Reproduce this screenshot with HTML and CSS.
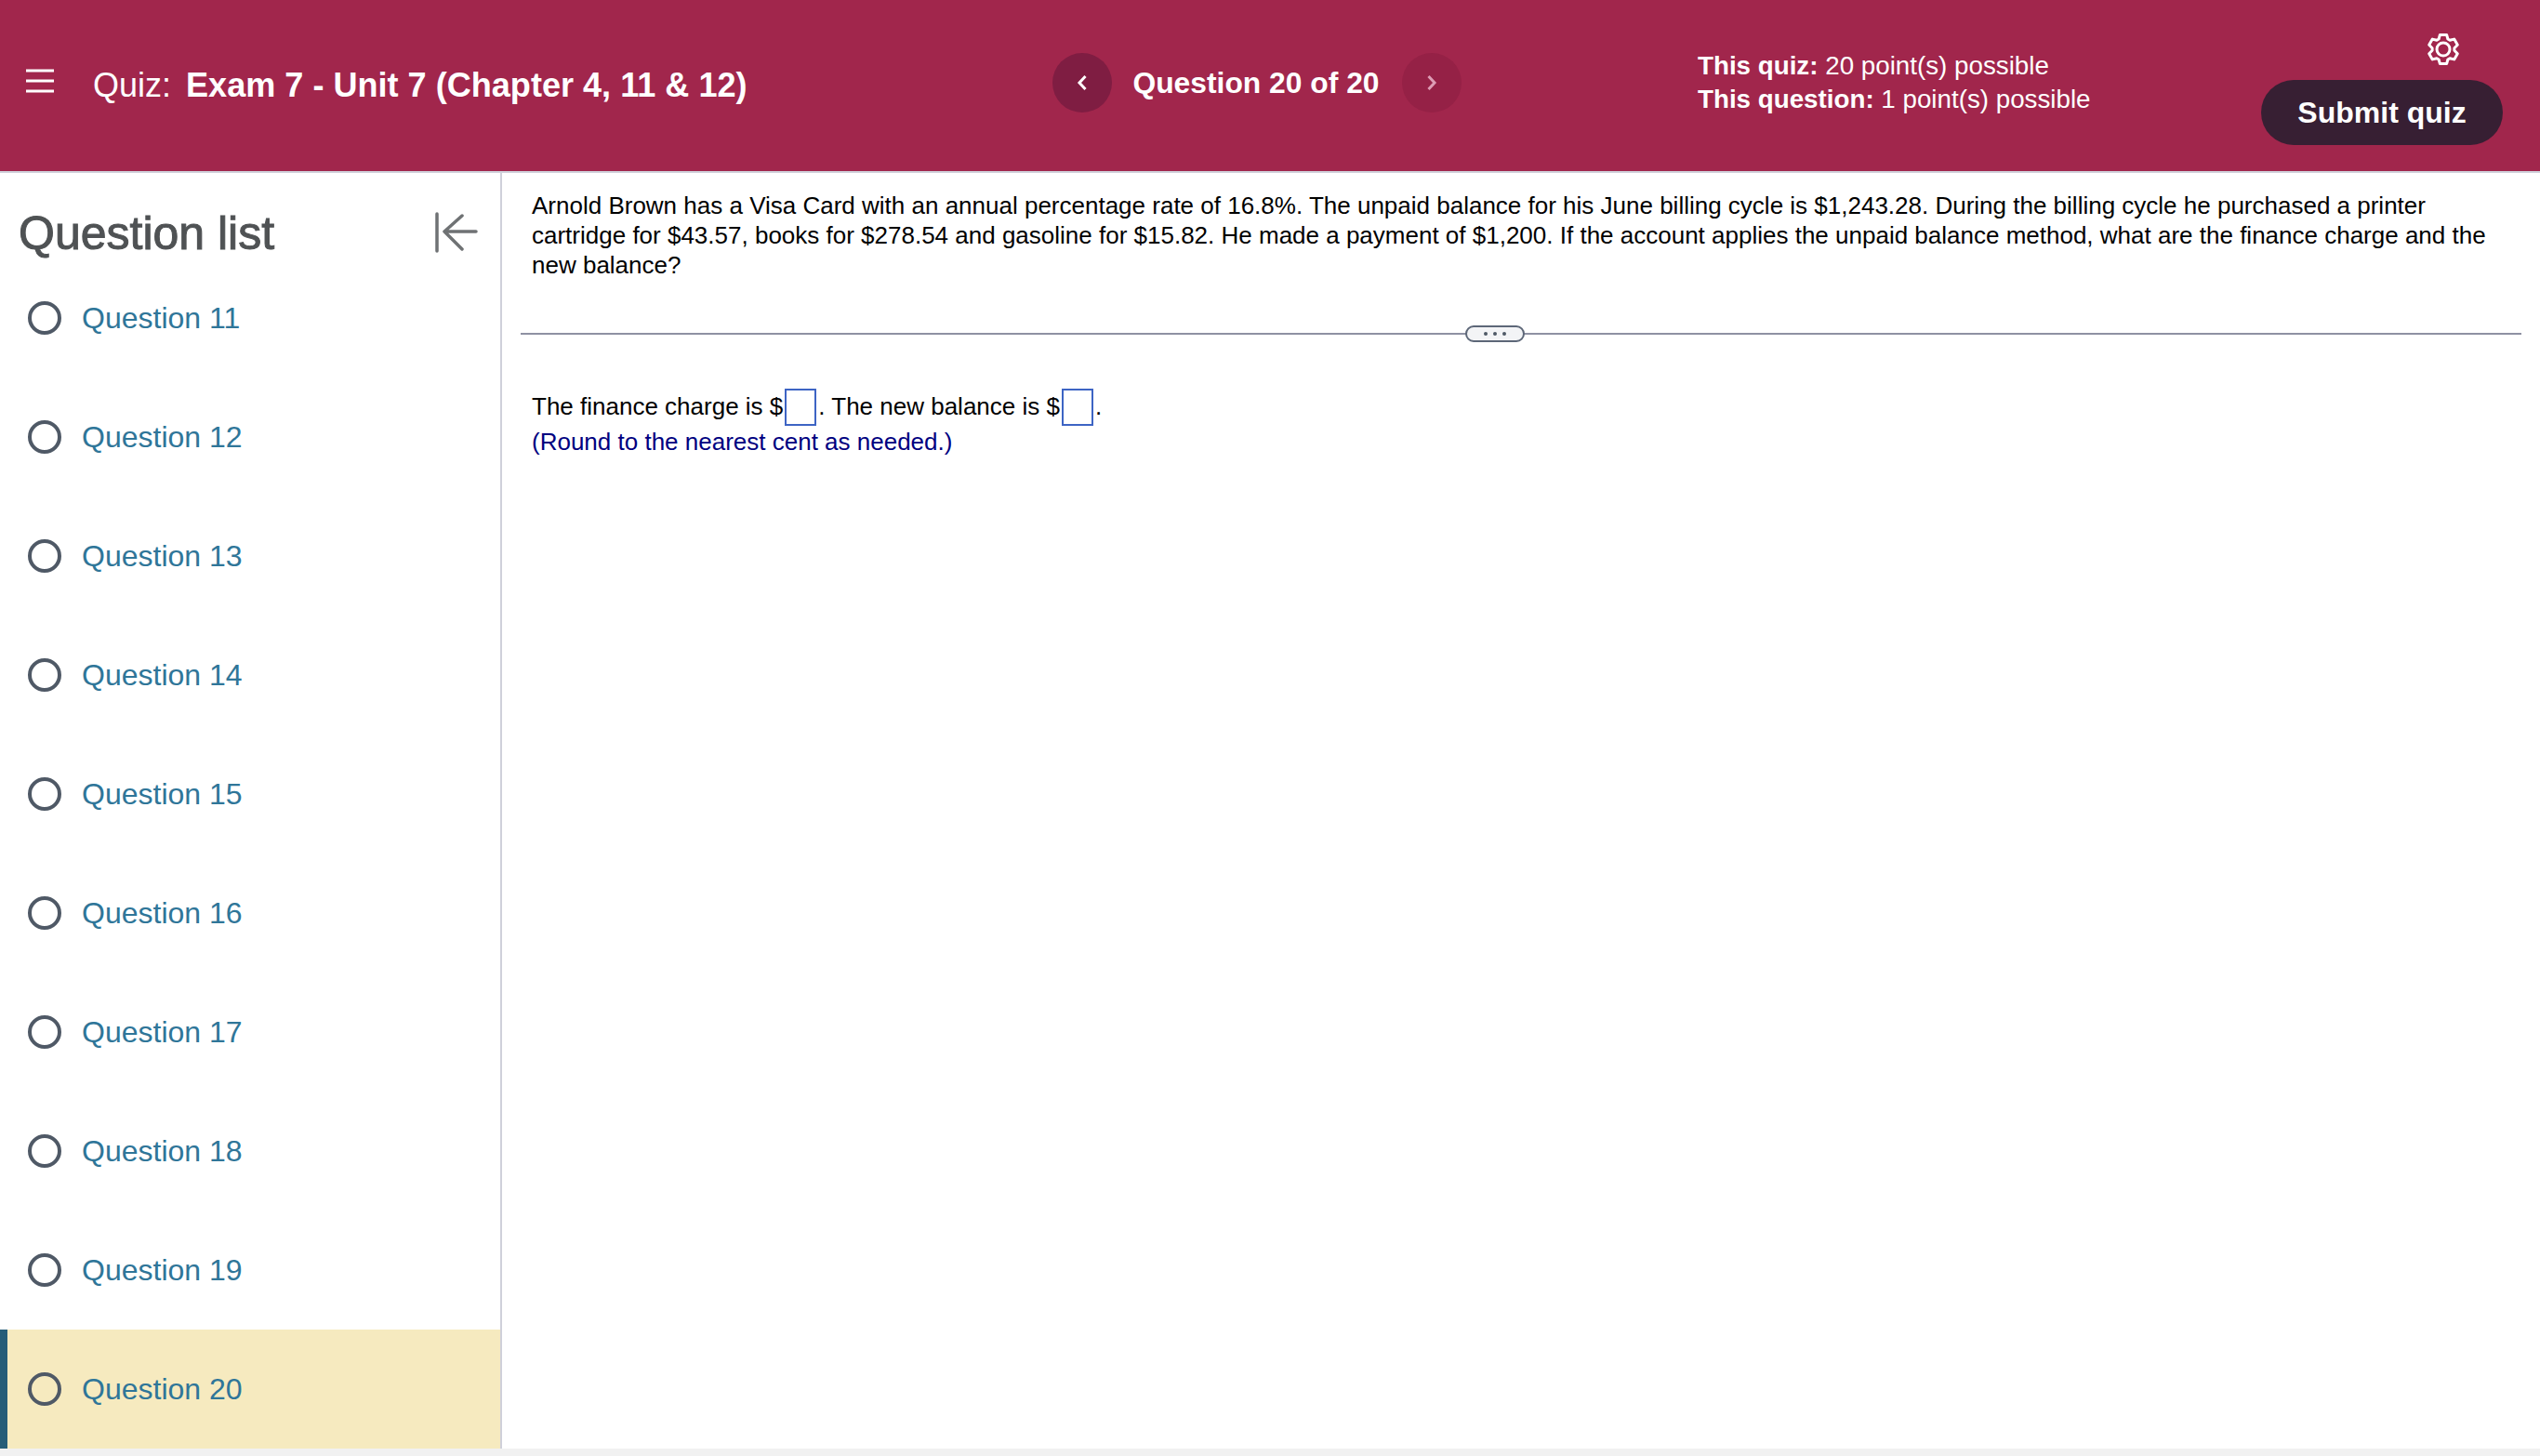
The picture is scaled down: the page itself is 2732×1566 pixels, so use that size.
FILE: index.html
```html
<!DOCTYPE html>
<html lang="en">
<head>
<meta charset="utf-8">
<title>Quiz: Exam 7 - Unit 7</title>
<link rel="stylesheet" href="styles.css">
</head>
<body>
<header class="topbar">
  <div class="title-group">
    <svg class="menu-icon" width="30" height="26" viewBox="0 0 30 26"><path d="M0 2h30M0 13h30M0 24h30" stroke="#fff" stroke-width="3" fill="none"/></svg>
    <div class="quiz-title">Quiz:<strong class="quiz-name">Exam 7 - Unit 7 (Chapter 4, 11 &amp; 12)</strong></div>
  </div>
  <nav class="pager">
    <span class="pager-btn pager-prev"><svg width="12" height="20" viewBox="0 0 12 20"><path d="M9.500 3L3 10l6.500 7" stroke="#fff" stroke-width="3" fill="none"/></svg></span>
    <span class="pager-label">Question 20 of 20</span>
    <span class="pager-btn pager-next"><svg width="12" height="20" viewBox="0 0 12 20"><path d="M2.500 3L9 10l-6.500 7" stroke="#dd9db5" stroke-width="3" fill="none"/></svg></span>
  </nav>
  <div class="points">
    <div><strong>This quiz:</strong> 20 point(s) possible</div>
    <div><strong>This question:</strong> 1 point(s) possible</div>
  </div>
  <div class="actions">
    <svg class="gear" width="36" height="36" viewBox="0 0 36 36" fill="none" stroke="#fff" stroke-width="3" stroke-linejoin="round"><path d="M14.400 2.400H21.600L22.900 7 25.050 8.300 29.700 7.100 33.300 13.300 29.900 16.700V19.300L33.300 22.700 29.700 28.900 25.050 27.700 22.900 29 21.600 33.600H14.400L13.100 29 10.950 27.700 6.300 28.900 2.700 22.700 6.100 19.300V16.700L2.700 13.300 6.300 7.100 10.950 8.300 13.100 7Z"/><circle cx="18" cy="18" r="7"/></svg>
    <button class="submit">Submit quiz</button>
  </div>
</header>
<div class="main">
  <aside class="sidebar">
    <div class="sidebar-head">
      <h2 class="sidebar-title">Question list</h2>
      <svg class="collapse" width="48" height="44" viewBox="0 0 48 44" fill="none" stroke="#6f7274" stroke-width="3.500" stroke-linecap="round" stroke-linejoin="round"><path d="M4 2v40M46 21H12M31 4L12 21l19 19"/></svg>
    </div>
    <ul class="qlist">
      <li class="qitem"><span class="radio"></span><a class="qlink">Question 11</a></li>
      <li class="qitem"><span class="radio"></span><a class="qlink">Question 12</a></li>
      <li class="qitem"><span class="radio"></span><a class="qlink">Question 13</a></li>
      <li class="qitem"><span class="radio"></span><a class="qlink">Question 14</a></li>
      <li class="qitem"><span class="radio"></span><a class="qlink">Question 15</a></li>
      <li class="qitem"><span class="radio"></span><a class="qlink">Question 16</a></li>
      <li class="qitem"><span class="radio"></span><a class="qlink">Question 17</a></li>
      <li class="qitem"><span class="radio"></span><a class="qlink">Question 18</a></li>
      <li class="qitem"><span class="radio"></span><a class="qlink">Question 19</a></li>
      <li class="qitem qitem-active"><span class="radio"></span><a class="qlink">Question 20</a></li>
    </ul>
  </aside>
  <section class="content">
    <p class="problem">Arnold Brown has a Visa Card with an annual percentage rate of 16.8%. The unpaid balance for his June billing cycle is $1,243.28. During the billing cycle he purchased a printer cartridge for $43.57, books for $278.54 and gasoline for $15.82. He made a payment of $1,200. If the account applies the unpaid balance method, what are the finance charge and the new balance?</p>
    <div class="divider"><span class="divider-pill"><i></i><i></i><i></i></span></div>
    <p class="answer">The finance charge is $<span class="blank"></span>. The new balance is $<span class="blank"></span>.</p>
    <p class="hint">(Round to the nearest cent as needed.)</p>
  </section>
</div>
<div class="footer-strip"></div>
</body>
</html>
```
FILE: styles.css
```css
* { box-sizing: border-box; }
html, body { margin: 0; height: 100%; }
body { font-family: "Liberation Sans", Arial, sans-serif; background: #fff; color: #000; display: flex; flex-direction: column; height: 1566px; overflow: hidden; }
.topbar { height: 186px; flex: none; background: #a1264c; border-bottom: 2px solid #cfd0da; padding-bottom: 6px; color: #fff; display: flex; align-items: center; }
.title-group { width: 1132px; flex: none; display: flex; align-items: center; padding-left: 28px; }
.menu-icon { margin-right: 42px; margin-bottom: 4px; }
.quiz-title { font-size: 36px; line-height: 44px; margin-top: 5px; }
.quiz-name { margin-left: 16px; font-weight: 700; font-size: 36.1px; }
.pager { width: 694px; flex: none; display: flex; align-items: center; }
.pager-btn { width: 64px; height: 64px; border-radius: 50%; display: flex; align-items: center; justify-content: center; }
.pager-prev { background: #7f1d42; }
.pager-next { background: #952146; }
.pager-label { width: 312px; padding-right: 2px; text-align: center; font-size: 31.8px; font-weight: 700; }
.points { font-size: 27.75px; line-height: 36px; width: 606px; flex: none; }
.actions { display: flex; flex-direction: column; align-items: flex-end; gap: 15px; margin-top: 13px; }
.gear { margin-right: 46px; }
.submit { width: 260px; height: 70px; border: 0; border-radius: 35px; background: #371f33; color: #fff; font: 700 32px "Liberation Sans", Arial, sans-serif; }
.main { flex: 1; display: flex; min-height: 0; }
.sidebar { width: 540px; flex: none; border-right: 2px solid #cfd0da; }
.sidebar-head { height: 92px; display: flex; align-items: flex-start; justify-content: space-between; padding: 40px 24px 0 20px; }
.sidebar-title { margin: 0; font-size: 50px; line-height: 50px; font-weight: 400; color: #4f5254; -webkit-text-stroke: 1px #4f5254; }
.collapse { flex: none; margin-top: 2px; }
.qlist { list-style: none; margin: 0; padding: 0; }
.qitem { height: 128px; display: flex; align-items: center; padding-left: 30px; }
.qitem-active { background: #f6eabf; box-shadow: inset 8px 0 0 #265d78; }
.radio { width: 36px; height: 36px; border: 4px solid #4f5966; border-radius: 50%; flex: none; margin-right: 22px; }
.qlink { font-size: 32px; color: #2f7699; }
.content { flex: 1; padding: 19px 20px 0; min-width: 0; }
.problem { margin: 0; padding: 0 12px; font-size: 26px; line-height: 32px; }
.divider { height: 2px; background: #8e91a3; margin-top: 57px; position: relative; }
.divider-pill { position: absolute; left: 1016px; top: -8px; width: 64px; height: 18px; background: #f3f4f6; border: 2px solid #5d6778; border-radius: 9px; display: flex; align-items: center; justify-content: center; gap: 6px; }
.divider-pill i { width: 4px; height: 4px; border-radius: 50%; background: #4f5966; }
.answer { margin: 57px 0 0; padding: 0 12px; font-size: 26px; line-height: 40px; }
.blank { display: inline-block; width: 34px; height: 40px; margin: 0 2px; border: 2px solid #3d64c4; vertical-align: -12px; background: #fff; }
.hint { margin: -1px 0 0; padding: 0 12px; font-size: 26px; line-height: 36px; color: #000080; }
.footer-strip { height: 8px; flex: none; background: #f1f1f1; }
```
